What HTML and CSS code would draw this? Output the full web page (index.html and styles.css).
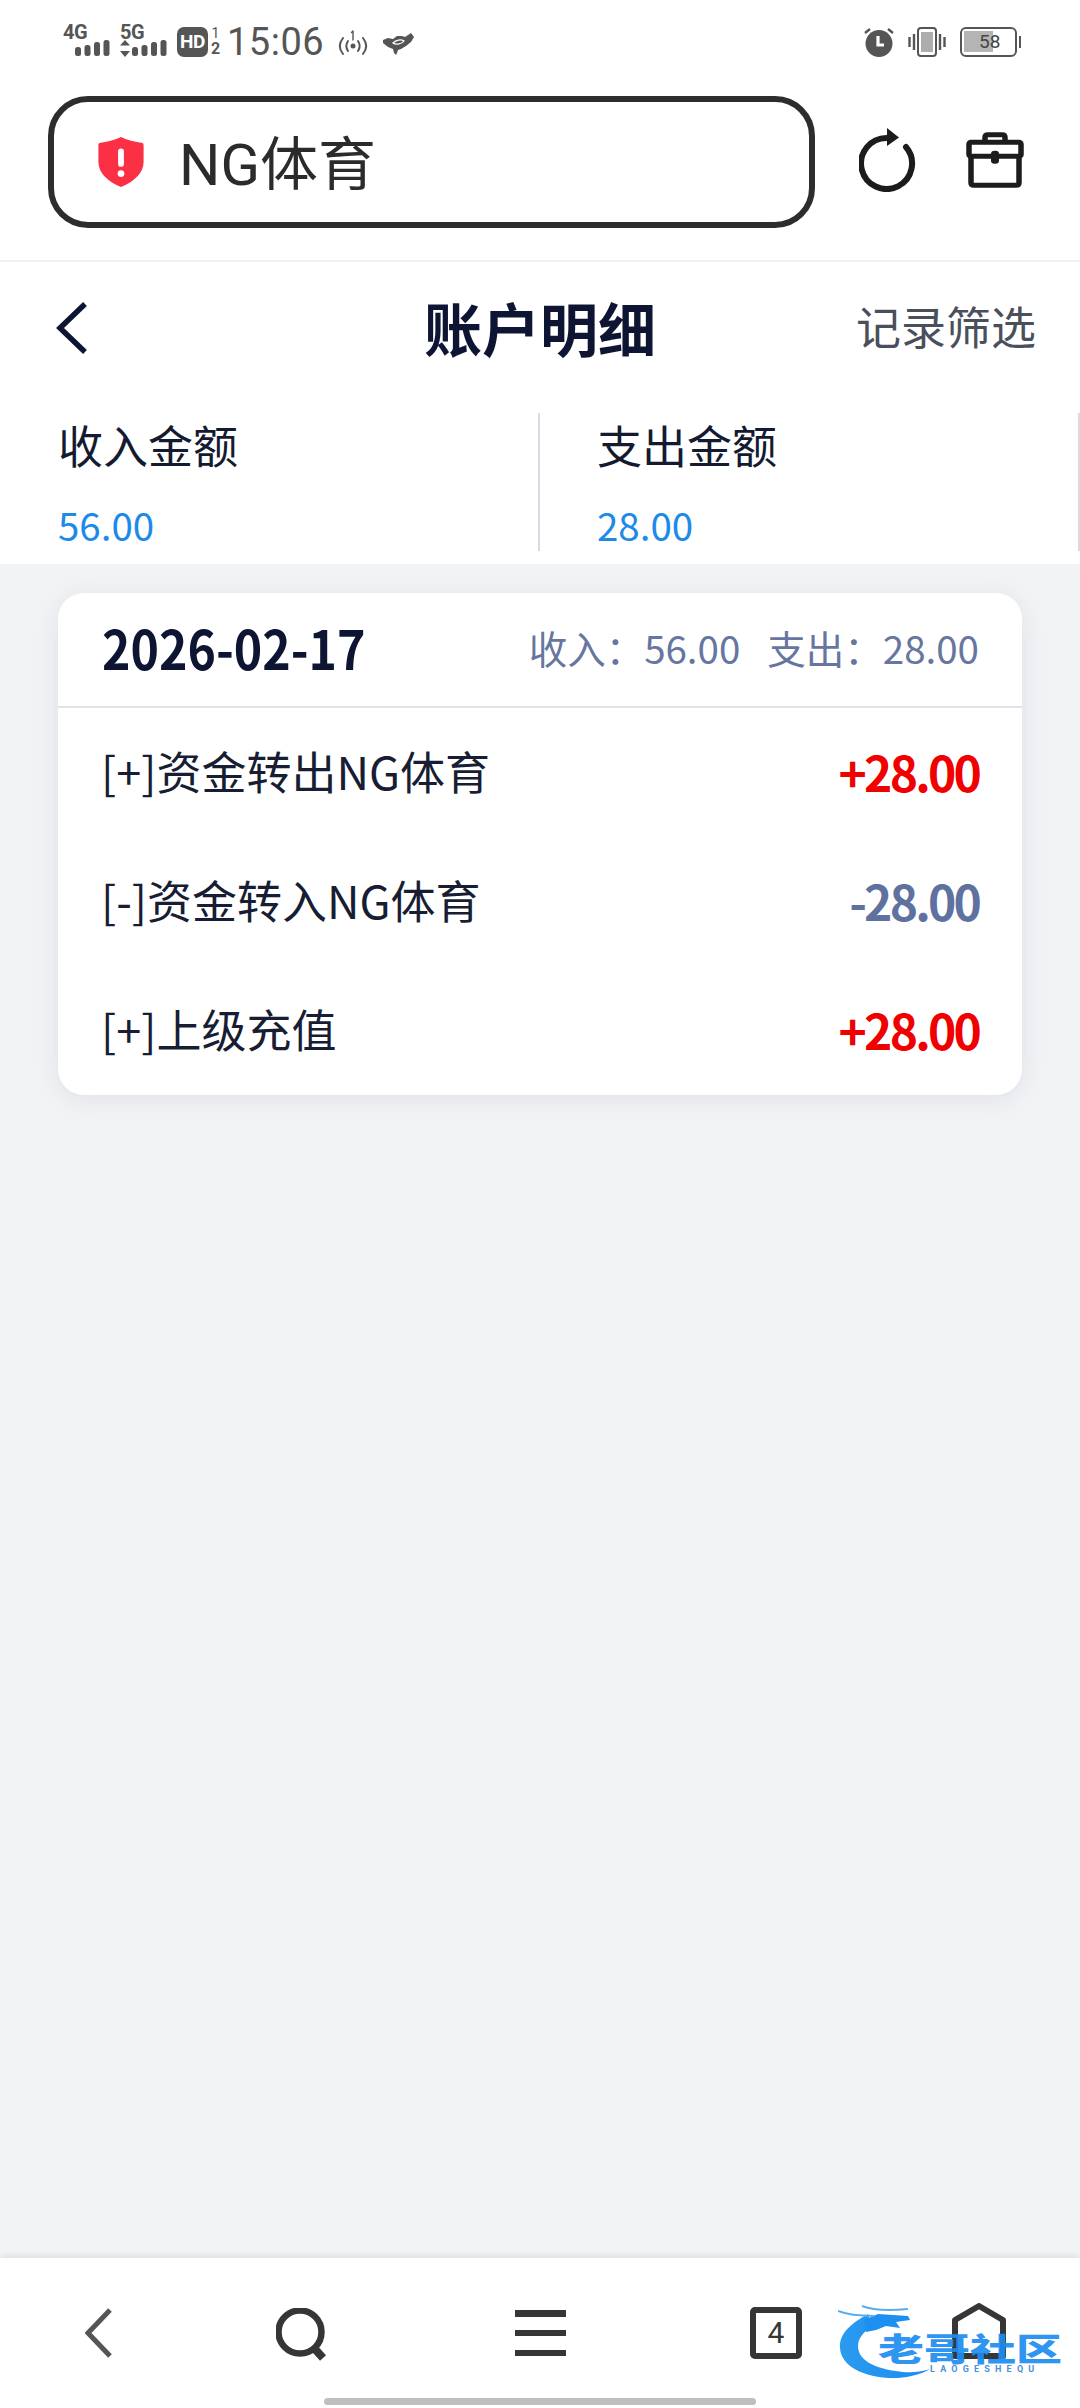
FILE: index.html
```html
<!DOCTYPE html>
<html lang="zh-CN">
<head>
<meta charset="utf-8">
<title>账户明细</title>
<link rel="stylesheet" href="styles.css">
</head>
<body>
<div class="screen">
  <header class="browser">
    <div class="status">
      <div class="status-left">
        <div class="net">
          <span class="net-label">4G</span>
          <svg class="net-bars" width="36" height="16" viewBox="0 0 36 16"><g fill="#555"><rect x="0" y="7" width="6" height="9" rx="2.500"/><rect x="9.500" y="5" width="6" height="11" rx="2.500"/><rect x="19" y="2" width="6" height="14" rx="2.500"/><rect x="28.500" y="0" width="6" height="16" rx="2.500"/></g></svg>
        </div>
        <div class="net net-five">
          <span class="net-label">5G</span>
          <svg class="net-bars" width="48" height="18" viewBox="0 0 48 18"><g fill="#555"><path d="M5 0l5 5.500H0zM5 17l5-6H0z"/><rect x="12" y="7" width="6" height="9" rx="2.500"/><rect x="21.500" y="5" width="6" height="11" rx="2.500"/><rect x="31" y="2" width="6" height="14" rx="2.500"/><rect x="40.500" y="0" width="6" height="16" rx="2.500"/></g></svg>
        </div>
        <span class="hd">HD</span>
        <span class="sim"><span class="sim-one">1</span><span class="sim-two">2</span></span>
        <span class="time">15:06</span>
        <svg class="hotspot" width="32" height="28" viewBox="0 0 32 28"><g fill="none" stroke="#555" stroke-width="2" stroke-linecap="round"><path d="M6 9c-4 5-4 11 0 16"/><path d="M11 12c-2 3-2 7 0 10"/><path d="M26 9c4 5 4 11 0 16"/><path d="M21 12c2 3 2 7 0 10"/><path d="M16 2v9M14.500 3.500 16 2" stroke-width="1.400"/></g><circle cx="16" cy="17" r="2.500" fill="#555"/></svg>
        <svg class="shake" width="31" height="22" viewBox="0 0 31 22"><path fill="#555" d="M0 7l5-2 5 1 4-3h5l3 1 6-4 3 4-3 5-5 4-5 3-3 1-1 3-1 2-2-2-1-4-5-2-5-4z"/><path fill="none" stroke="#fff" stroke-width="1.300" d="M10 10c3-3 8-4 11-2-2 3-8 4-11 2z"/></svg>
      </div>
      <div class="status-right">
        <svg width="30" height="30" viewBox="0 0 30 30"><circle cx="15" cy="16.500" r="13.500" fill="#555"/><path d="M1 6l5-4M29 6l-5-4" stroke="#555" stroke-width="2.400"/><path d="M14 9v9h6" fill="none" stroke="#fff" stroke-width="3.200"/></svg>
        <svg width="38" height="30" viewBox="0 0 38 30"><rect x="10" y="1" width="18" height="28" rx="3" fill="#fff" stroke="#555" stroke-width="2"/><rect x="13" y="5" width="12" height="20" fill="#adadad"/><path d="M1.500 10v10M6 7v16M32 7v16M36.500 10v10" stroke="#555" stroke-width="2.400"/></svg>
        <div class="battery"><span class="battery-fill"></span><span class="battery-num">58</span></div>
      </div>
    </div>
    <div class="address-row">
      <div class="address">
        <svg class="shield" width="46" height="50" viewBox="0 0 47 52"><path fill="#fb3044" d="M23.500 0c6 3 13 5 21 6 2 .3 2.500 1 2.500 3v17c0 11-9 20-23.500 26C9 46 0 37 0 26V9c0-2 .5-2.700 2.500-3 8-1 15-3 21-6z"/><rect x="20.500" y="12" width="6" height="19" rx="3" fill="#fff"/><circle cx="23.500" cy="38" r="3.500" fill="#fff"/></svg>
        <span class="address-text">NG体育</span>
      </div>
      <svg class="tool" width="60" height="64" viewBox="0 0 60 64"><path fill="none" stroke="#1c1c1c" stroke-width="6" stroke-linecap="round" d="M47 19a25.500 25.500 0 1 1-19-9"/><path fill="#1c1c1c" d="M28 0l12 9.500L28 18z"/></svg>
      <svg class="tool tool-bag" width="58" height="56" viewBox="0 0 58 60" preserveAspectRatio="none"><g fill="none" stroke="#1c1c1c" stroke-width="5.500" stroke-linejoin="round"><path d="M19 11V6c0-2 1-3 3-3h14c2 0 3 1 3 3v5"/><rect x="3" y="11" width="52" height="15" rx="2"/><path d="M5 26v28c0 2 1 3 3 3h42c2 0 3-1 3-3V26"/></g><rect x="25" y="20" width="8" height="14" rx="3.500" fill="#1c1c1c"/></svg>
    </div>
  </header>

  <nav class="title-bar">
    <svg class="title-back" width="32" height="52" viewBox="0 0 32 52"><path d="M29 2 4 26l25 24" fill="none" stroke="#0d1533" stroke-width="5.500"/></svg>
    <h1 class="title">账户明细</h1>
    <span class="title-action">记录筛选</span>
  </nav>

  <section class="summary">
    <div class="summary-cell">
      <div class="summary-label">收入金额</div>
      <div class="summary-value">56.00</div>
    </div>
    <div class="summary-cell">
      <div class="summary-label">支出金额</div>
      <div class="summary-value">28.00</div>
    </div>
  </section>

  <main class="content">
    <article class="card">
      <div class="card-head">
        <span class="card-date">2026-02-17</span>
        <span class="card-totals"><span>收入：56.00</span><span>支出：28.00</span></span>
      </div>
      <div class="row"><span class="row-name">[+]资金转出NG体育</span><span class="amount plus">+28.00</span></div>
      <div class="row"><span class="row-name">[-]资金转入NG体育</span><span class="amount minus">-28.00</span></div>
      <div class="row"><span class="row-name">[+]上级充值</span><span class="amount plus">+28.00</span></div>
    </article>
  </main>

  <footer class="bottom">
    <div class="bottom-item"><svg width="28" height="50" viewBox="0 0 28 50"><path d="M25 2 3 25l22 23" fill="none" stroke="#555" stroke-width="5"/></svg></div>
    <div class="bottom-item"><svg width="52" height="54" viewBox="0 0 52 54"><circle cx="24" cy="24" r="21.500" fill="none" stroke="#363636" stroke-width="6.500"/><path d="M38 40l9 10" stroke="#363636" stroke-width="8"/></svg></div>
    <div class="bottom-item"><div class="menu"><span></span><span></span><span></span></div></div>
    <div class="bottom-item"><div class="tabs">4</div></div>
    <div class="bottom-item"><svg class="home" width="54" height="56" viewBox="0 0 54 56"><path d="M3 53V17L27 3l24 14v36z" fill="none" stroke="#363636" stroke-width="6" stroke-linejoin="round"/></svg></div>
    <div class="indicator"></div>
    <div class="watermark">
      <svg class="dragon" width="110" height="76" viewBox="0 0 110 76"><defs><linearGradient id="dr" x1="0" y1="0" x2="1" y2="0"><stop offset="0" stop-color="#2a9bee"/><stop offset="1" stop-color="#1b8cf2"/></linearGradient></defs><path fill="url(#dr)" d="M30 10C12 20 1 30 2 44c1 18 24 31 58 30 12-1 24-4 32-9-12 4-24 4-34 2C36 64 20 56 20 42c0-8 6-14 14-20z"/><path fill="#1c8ff0" d="M26 16l14-6 30 2 2 4-14 2 4 6-14-2-10 4-10 2z"/><path fill="none" stroke="#55aef0" stroke-width="2" d="M0 7c10 4 24 5 36 5M24 2c10 4 26 5 46 3"/></svg>
      <span class="wm-name">老哥社区</span>
      <span class="wm-sub">LAOGESHEQU</span>
    </div>
  </footer>
</div>
</body>
</html>
```

FILE: styles.css
```css
* { box-sizing: border-box; }
html, body { margin: 0; padding: 0; }
body { font-family: "Noto Sans CJK SC", "Noto Sans", sans-serif; background: #f2f3f5; }
.screen { width: 1080px; height: 2408px; display: flex; flex-direction: column; overflow: hidden; position: relative; background: #f2f3f5; }

.browser { background: #fff; height: 262px; border-bottom: 2px solid #f0f0f2; display: flex; flex-direction: column; }
.status { height: 88px; padding: 25px 63px 0 63px; display: flex; justify-content: space-between; align-items: flex-start; }
.status-left { display: flex; align-items: flex-start; }
.status-right { display: flex; align-items: center; gap: 14px; padding-top: 2px; }
.net { display: flex; flex-direction: column; width: 57px; height: 34px; }
.net-five { width: 57px; }
.net-label { font: 700 20px/15px "Roboto", sans-serif; color: #555; height: 15px; letter-spacing: -.5px; white-space: nowrap; }
.net-bars { margin-left: 12px; }
.net-five .net-bars { margin-left: 0; }
.hd { width: 31px; height: 30px; margin: 2px 0 0 0; border-radius: 7px; background: #555; color: #fff; font: 700 19px/30px "Roboto", sans-serif; text-align: center; letter-spacing: -.5px; }
.sim { width: 11px; margin: 1px 0 0 2px; display: flex; flex-direction: column; align-items: center; color: #555; font: 700 16px/15px "Roboto", sans-serif; }
.sim-one { font-weight: 400; font-size: 14px; }
.time { margin: -6px 0 0 6px; font: 400 38px/46px "Roboto", sans-serif; color: #555; letter-spacing: .5px; }
.hotspot { margin: 4px 0 0 13px; }
.shake { margin: 8px 0 0 14px; }
.battery { width: 57px; height: 30px; border: 2.500px solid #555; border-radius: 6px; position: relative; padding: 2px; }
.battery::after { content: ""; position: absolute; right: -6px; top: 7px; width: 2px; height: 12px; background: #555; }
.battery-fill { display: block; width: 29px; height: 21px; background: #b4b4b4; }
.battery-num { position: absolute; left: 17px; top: 0; font: 400 19px/25px "Roboto", sans-serif; color: #444; }

.address-row { display: flex; align-items: center; padding: 8px 0 0 48px; }
.address { width: 767px; height: 132px; border: 6px solid #2d2d2d; border-radius: 40px; display: flex; align-items: center; padding-left: 44px; gap: 35px; }
.address-text { font-size: 58px; line-height: 70px; color: #2b2b2b; font-family: "Roboto", "Noto Sans CJK SC", sans-serif; margin-top: 6px; }
.tool { margin: -4px 0 0 44px; }
.tool-bag { margin: -4px 0 0 47px; }

.title-bar { height: 124px; background: #fff; display: flex; align-items: center; justify-content: center; position: relative; padding-top: 5px; }
.title { margin: 0; font-size: 58px; line-height: 80px; font-weight: 700; color: #0d1533; }
.title-back { position: absolute; left: 56px; top: 40px; }
.title-action { position: absolute; right: 44px; top: 32px; font-size: 45px; line-height: 64px; color: #4a4f5c; }

.summary { background: #fff; height: 178px; display: flex; padding-top: 27px; }
.summary-cell { width: 540px; height: 138px; border-right: 2px solid #d8dbe4; padding-left: 58px; }
.summary-cell + .summary-cell { padding-left: 57px; }
.summary-label { font-size: 45px; line-height: 64px; color: #141a30; margin-top: 0; }
.summary-value { font-size: 38.500px; line-height: 60px; color: #1e8ae8; margin-top: 17px; }

.content { flex: 1; padding: 29px 58px 0; min-height: 0; }
.card { background: #fff; border-radius: 26px; box-shadow: 0 4px 24px rgba(180,186,205,.3); overflow: hidden; height: 502px; }
.card-head { height: 115px; border-bottom: 2px solid #e2e3e8; display: flex; justify-content: space-between; align-items: center; padding: 0 43px 6px 44px; }
.card-date { font-size: 54px; font-weight: 700; color: #0d1533; line-height: 70px; transform: scaleX(.894); transform-origin: left center; }
.card-totals { display: flex; gap: 27px; font-size: 38.500px; color: #66769f; line-height: 60px; }
.row { height: 129px; display: flex; justify-content: space-between; align-items: center; padding: 0 43px 3px 43px; }
.row-name { font-size: 45px; color: #171d33; line-height: 60px; }
.amount { font-size: 48px; font-weight: 700; line-height: 60px; letter-spacing: -2.800px; }
.plus { color: #f00000; }
.minus { color: #5f729f; }

.bottom { height: 150px; background: #fff; box-shadow: 0 -3px 6px rgba(0,0,0,.07); display: grid; grid-template-columns: 198px 208px 268px 204px 202px; position: relative; }
.bottom-item { display: flex; align-items: flex-start; justify-content: center; padding-top: 50px; }
.bottom-item .home { margin-top: -5px; }
.menu { width: 51px; height: 46px; display: flex; flex-direction: column; justify-content: space-between; margin-top: 2px; }
.menu span { display: block; height: 6.500px; background: #363636; }
.tabs { width: 52px; height: 52px; border: 6px solid #363636; border-radius: 5px; text-align: center; font: 400 30px/40px "Roboto", sans-serif; color: #363636; margin-top: -1px; }
.indicator { position: absolute; left: 324px; bottom: 3px; width: 432px; height: 7px; border-radius: 4px; background: #bfbfbf; }
.watermark { position: absolute; left: 838px; top: 46px; width: 226px; height: 76px; }
.dragon { position: absolute; left: 0; top: 0; }
.wm-name { position: absolute; left: 40px; top: 28px; font-size: 46px; line-height: 30px; font-weight: 900; white-space: nowrap; color: #1d8df0; opacity: .92; transform: scaleY(.68); transform-origin: center; }
.wm-sub { position: absolute; left: 92px; top: 60px; font: 700 9px/11px "Roboto", sans-serif; letter-spacing: 5.200px; color: #4a93d8; white-space: nowrap; }
```
